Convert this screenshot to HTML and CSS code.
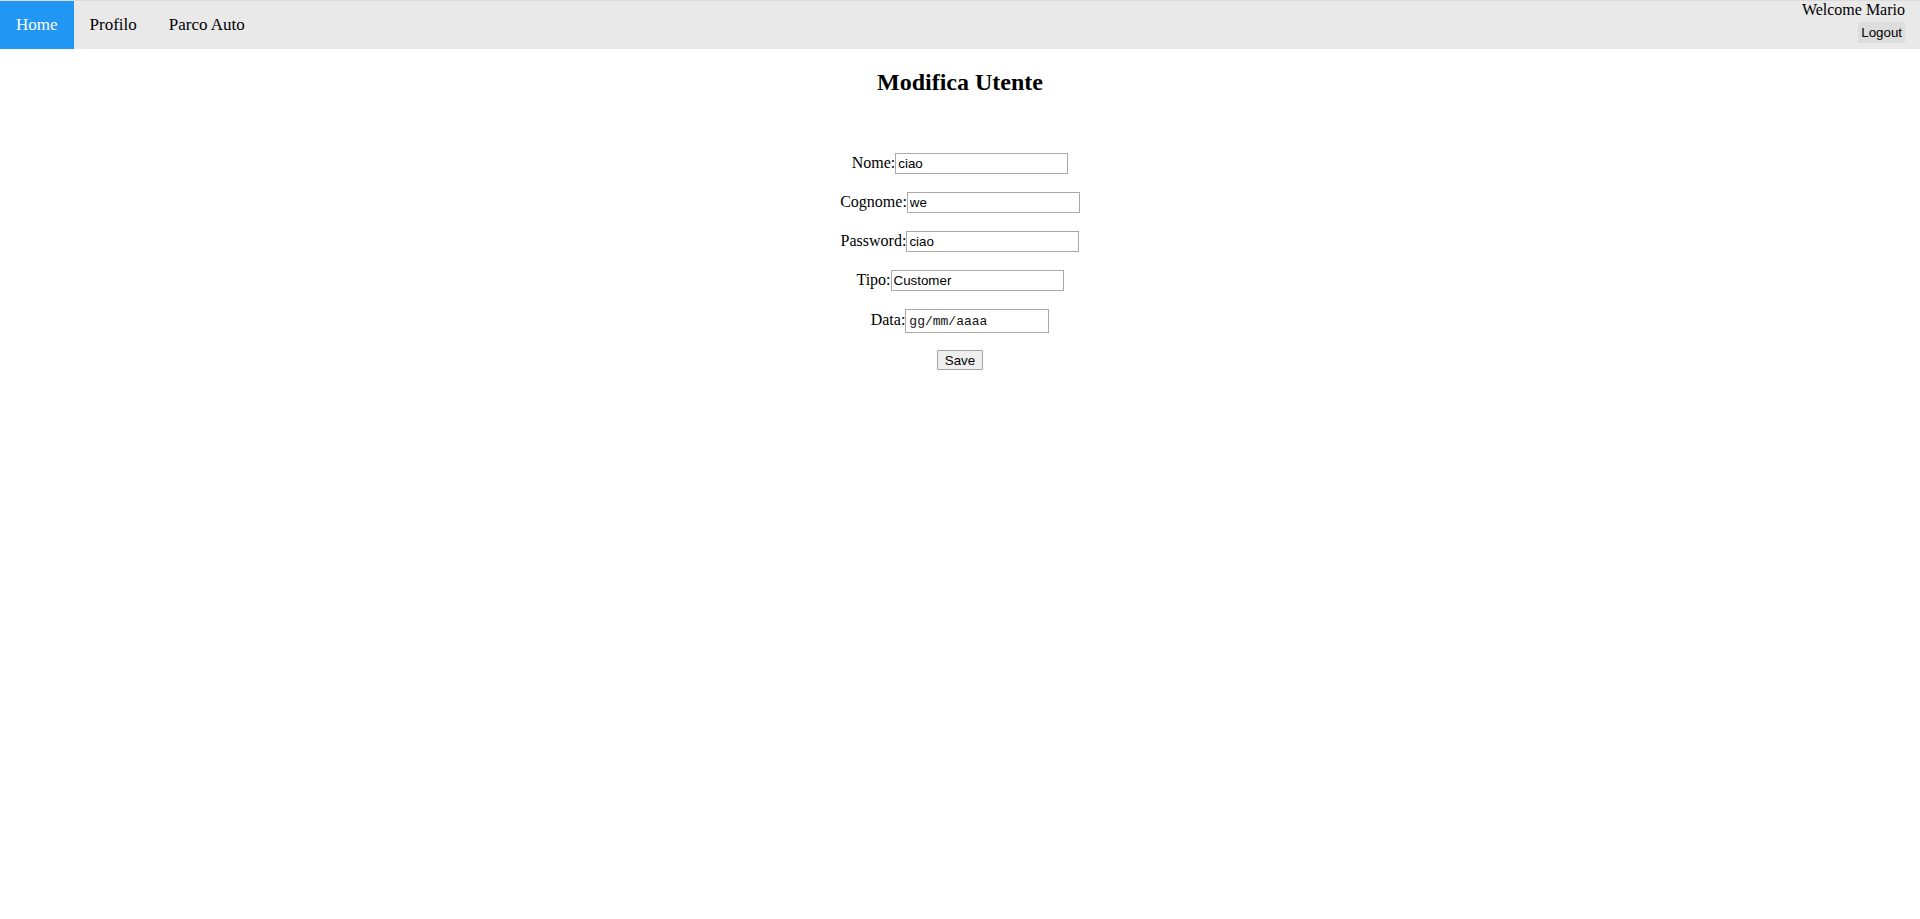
FILE: index.html
```html
<!DOCTYPE html>
<html lang="it">
<head>
<meta charset="utf-8">
<title>Modifica Utente</title>
<link rel="stylesheet" href="styles.css">
</head>
<body>
<nav class="topnav">
  <div class="links">
    <a class="link active" href="#">Home</a>
    <a class="link" href="#">Profilo</a>
    <a class="link" href="#">Parco Auto</a>
  </div>
  <div class="user">
    <span class="welcome">Welcome Mario</span>
    <button class="logout" type="button">Logout</button>
  </div>
</nav>
<main class="content">
  <h2 class="title">Modifica Utente</h2>
  <form class="form">
    <div class="row"><label class="label" for="nome">Nome:</label><input class="field" id="nome" type="text" value="ciao"></div>
    <div class="row"><label class="label" for="cognome">Cognome:</label><input class="field" id="cognome" type="text" value="we"></div>
    <div class="row"><label class="label" for="password">Password:</label><input class="field" id="password" type="text" value="ciao"></div>
    <div class="row"><label class="label" for="tipo">Tipo:</label><input class="field" id="tipo" type="text" value="Customer"></div>
    <div class="row row-date"><label class="label" for="data">Data:</label><input class="field date" id="data" type="text" placeholder="gg/mm/aaaa"></div>
    <div class="row"><button class="save" type="button">Save</button></div>
  </form>
</main>
</body>
</html>
```
FILE: styles.css
```css
html, body {
  margin: 0;
  padding: 0;
  background: #ffffff;
  font-family: "Liberation Serif", "Times New Roman", serif;
  font-size: 16px;
  color: #000;
}

.topnav {
  display: flex;
  justify-content: space-between;
  height: 48px;
  background: #e9e9e9;
  border-top: 1px solid #dcdcdc;
}

.links {
  display: flex;
}

.link {
  display: flex;
  align-items: center;
  padding: 0 16px;
  font-size: 17px;
  color: #000;
  text-decoration: none;
}

.link.active {
  background: #2196f3;
  color: #fff;
}

.user {
  display: flex;
  flex-direction: column;
  align-items: flex-end;
  padding-right: 15px;
}

.welcome {
  font-size: 16px;
  line-height: 18px;
}

.logout {
  margin-top: 3px;
  border: none;
  background: #dddddd;
  padding: 3px 3px;
  height: 21px;
  font-family: "Liberation Sans", Arial, sans-serif;
  font-size: 13.333px;
  line-height: 15px;
  color: #000;
}

.content {
  text-align: center;
}

.title {
  margin: 20px 0 0;
  font-size: 24px;
  line-height: 27px;
  font-weight: bold;
}

.form {
  display: flex;
  flex-direction: column;
  align-items: center;
  padding-top: 57px;
  gap: 16px;
}

.row {
  display: flex;
  align-items: baseline;
  justify-content: center;
  height: 23px;
}

.row-date {
  height: 25px;
}

.label {
  font-size: 16px;
}

.field {
  box-sizing: border-box;
  width: 173px;
  height: 21px;
  padding: 1px 2px;
  border: 1px solid #a9a9a9;
  font-family: "Liberation Sans", Arial, sans-serif;
  font-size: 13.333px;
  color: #000;
  background: #fff;
  outline: none;
}

.field.date {
  width: 144px;
  height: 24px;
  padding: 1px 3px;
  font-family: "Liberation Mono", "DejaVu Sans Mono", monospace;
  font-size: 13px;
}

.field.date::placeholder {
  color: #111;
  opacity: 1;
}

.save {
  box-sizing: border-box;
  width: 46px;
  height: 20px;
  padding: 0 6px;
  border: 1px solid #a0a0a0;
  border-radius: 1px;
  background: #efefef;
  font-family: "Liberation Sans", Arial, sans-serif;
  font-size: 13.333px;
  color: #000;
}
```
